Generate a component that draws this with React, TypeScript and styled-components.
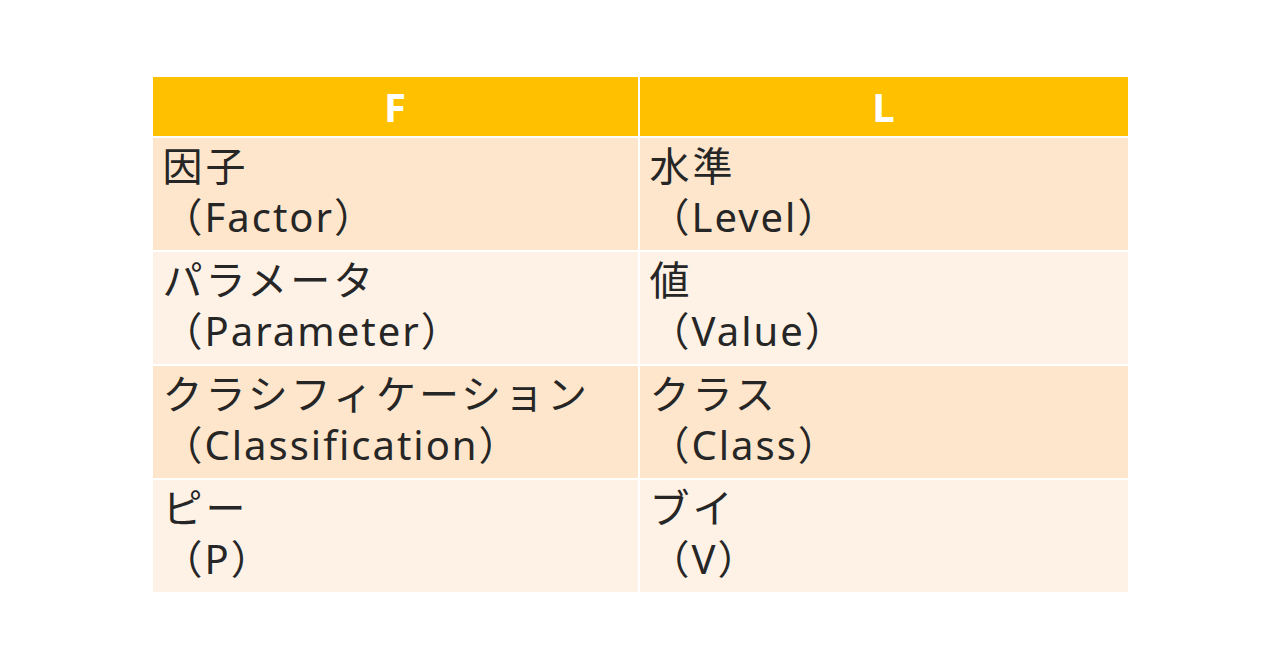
import React from "react";
import styled, { createGlobalStyle } from "styled-components";

const GlobalStyle = createGlobalStyle`
  html, body {
    margin: 0;
    padding: 0;
    background: #ffffff;
  }
  body {
    font-family: "Noto Sans", "Noto Sans CJK JP", sans-serif;
  }
`;

const Page = styled.div`
  width: 1280px;
  height: 670px;
  display: flex;
  justify-content: center;
  padding-top: 77px;
  box-sizing: border-box;
`;

const Table = styled.div`
  display: grid;
  grid-template-columns: 485px 488px;
  grid-template-rows: 59px repeat(4, 112px);
  gap: 2px;
  width: 975px;
  align-self: flex-start;
`;

const HeaderCell = styled.div`
  background: #ffc000;
  color: #ffffff;
  font-weight: 700;
  font-size: 40px;
  display: flex;
  align-items: center;
  justify-content: center;
`;

const Cell = styled.div<{ $shade: "dark" | "light" }>`
  background: ${(p) => (p.$shade === "dark" ? "#fee6cc" : "#fef2e6")};
  color: #262626;
  font-size: 40px;
  line-height: 50px;
  padding: 1px 10px 0;
  box-sizing: border-box;
  white-space: nowrap;
`;

const JaLine = styled.div`
  font-family: "Noto Sans CJK JP", sans-serif;
  letter-spacing: 3px;
`;

const EnLine = styled.div`
  font-family: "Noto Sans", "Noto Sans CJK JP", sans-serif;
  letter-spacing: 2px;
  margin-top: 3px;
`;

const rows: [string, string, string, string][] = [
  ["因子", "（Factor）", "水準", "（Level）"],
  ["パラメータ", "（Parameter）", "値", "（Value）"],
  ["クラシフィケーション", "（Classification）", "クラス", "（Class）"],
  ["ピー", "（P）", "ブイ", "（V）"],
];

export default function App() {
  return (
    <>
      <GlobalStyle />
      <Page>
        <Table>
          <HeaderCell>F</HeaderCell>
          <HeaderCell>L</HeaderCell>
          {rows.map((r, i) => {
            const shade = i % 2 === 0 ? "dark" : "light";
            return (
              <React.Fragment key={i}>
                <Cell $shade={shade}>
                  <JaLine>{r[0]}</JaLine>
                  <EnLine>{r[1]}</EnLine>
                </Cell>
                <Cell $shade={shade}>
                  <JaLine>{r[2]}</JaLine>
                  <EnLine>{r[3]}</EnLine>
                </Cell>
              </React.Fragment>
            );
          })}
        </Table>
      </Page>
    </>
  );
}
